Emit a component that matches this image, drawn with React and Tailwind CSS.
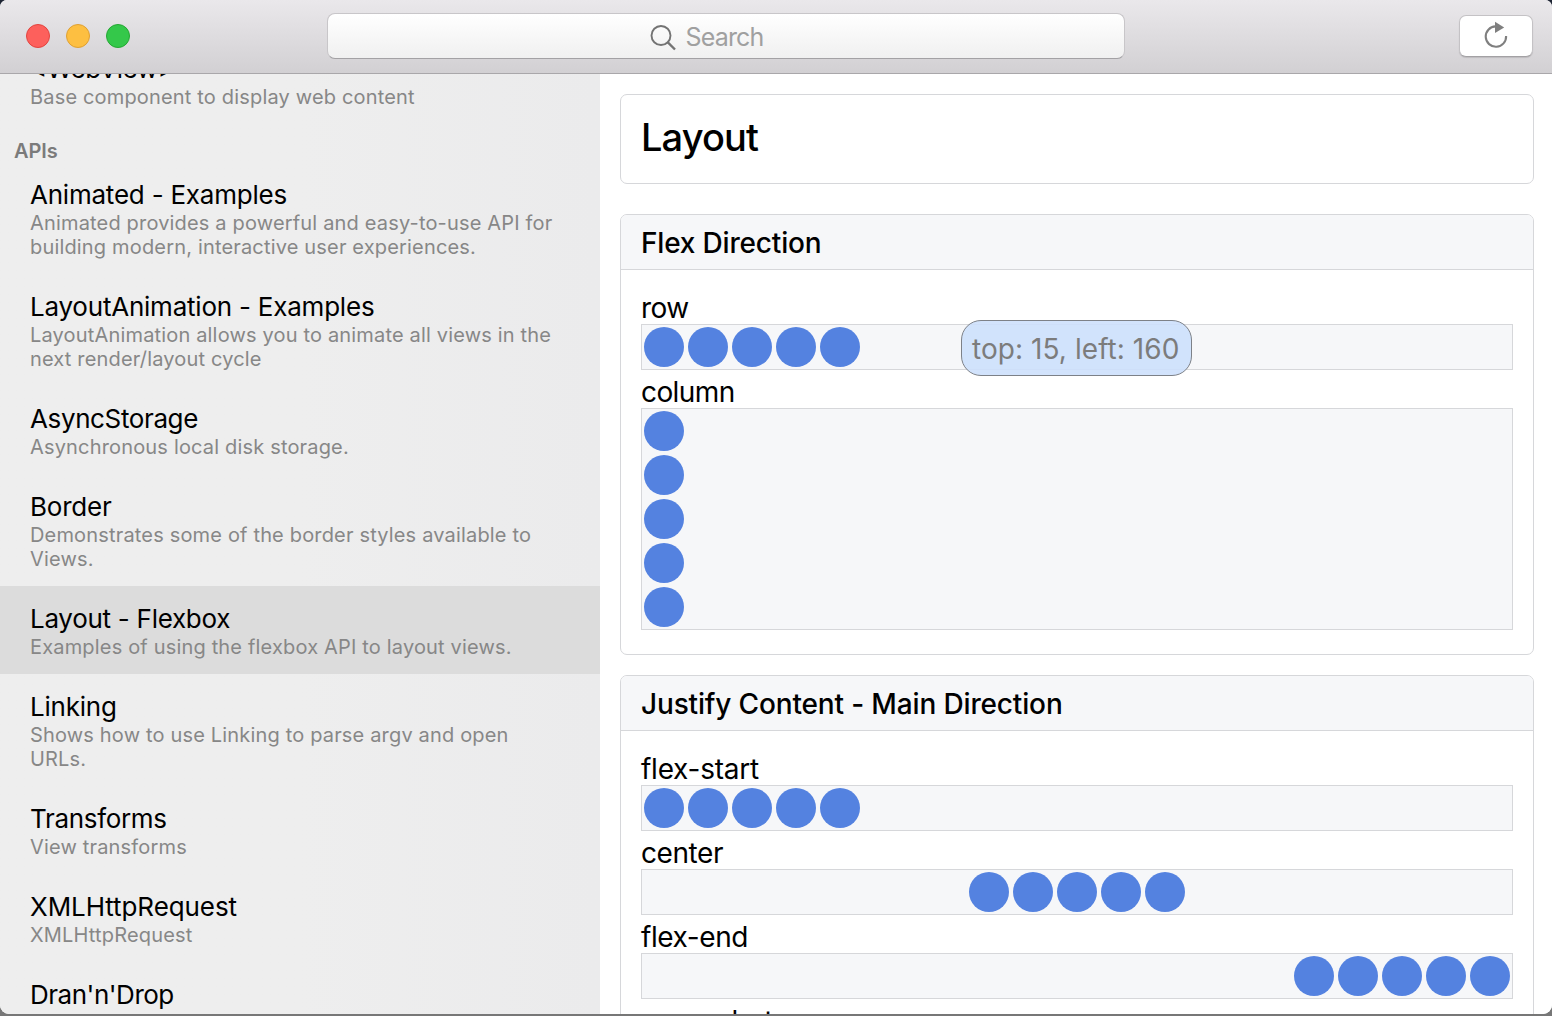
import React from "react";

const apis = [
  { title: "Animated - Examples", lines: ["Animated provides a powerful and easy-to-use API for", "building modern, interactive user experiences."] },
  { title: "LayoutAnimation - Examples", lines: ["LayoutAnimation allows you to animate all views in the", "next render/layout cycle"] },
  { title: "AsyncStorage", lines: ["Asynchronous local disk storage."], tracking: "tracking-[-0.38px]" },
  { title: "Border", lines: ["Demonstrates some of the border styles available to", "Views."] },
  { title: "Layout - Flexbox", lines: ["Examples of using the flexbox API to layout views."], selected: true, tracking: "tracking-[-0.28px]" },
  { title: "Linking", lines: ["Shows how to use Linking to parse argv and open", "URLs."] },
  { title: "Transforms", lines: ["View transforms"], tracking: "tracking-[-0.32px]" },
  { title: "XMLHttpRequest", lines: ["XMLHttpRequest"], tracking: "tracking-[-0.08px]" },
  { title: "Dran'n'Drop", lines: ["Drag and drop"], tracking: "tracking-[-0.48px]" },
];

function Item({ title, lines, selected, tracking = "tracking-[-0.22px]" }) {
  return (
    <div className={`shrink-0 px-[30px] py-4 ${selected ? "bg-[#dcdcdc]" : ""}`}>
      <div className={`h-8 text-[26px] leading-[33px] whitespace-nowrap text-black ${tracking}`}>{title}</div>
      {lines.map((l) => (
        <div key={l} className="h-6 text-[20px] leading-[26px] tracking-[0.17px] whitespace-nowrap text-[#878787]">{l}</div>
      ))}
    </div>
  );
}

function Dots({ className }) {
  return (
    <div className={`flex gap-1 border border-[#d6d7da] bg-[#f6f7f9] p-[2px] ${className}`}>
      {[0, 1, 2, 3, 4].map((i) => (
        <div key={i} className="size-10 shrink-0 rounded-full bg-[#5482e0]" />
      ))}
    </div>
  );
}

function Label({ children, tracking = "tracking-[-0.42px]" }) {
  return <div className={`h-[38px] pt-[5px] text-[28px] leading-[35px] text-black ${tracking}`}>{children}</div>;
}

function Card({ title, tracking, children }) {
  return (
    <section className="shrink-0 overflow-hidden rounded-[7px] border border-[#d6d7da] bg-white">
      <h2 className={`h-[55px] border-b border-[#d6d7da] bg-[#f6f7f9] px-5 text-[28px] leading-[57px] font-medium text-black ${tracking}`}>{title}</h2>
      <div className="px-5 pt-4 pb-6">{children}</div>
    </section>
  );
}

export default function App() {
  return (
    <div className="h-[1016px] w-[1552px] overflow-hidden bg-linear-to-b from-[#1d2433] via-[#5c6068] via-5% to-[#777777] font-['Inter',sans-serif]">
      <div className="flex h-[1014px] flex-col overflow-hidden rounded-t-[7px] rounded-b-[9px] bg-white">
        <header className="flex h-[74px] shrink-0 items-start border-b border-[#a9a7aa] bg-linear-to-b from-[#eae8eb] to-[#d2d0d3]">
          <div className="flex w-[327px] gap-4 pt-6 pl-[26px]">
            <div className="size-6 rounded-full border border-[#e2443f] bg-[#fd605c]" />
            <div className="size-6 rounded-full border border-[#dfa033] bg-[#fdbf41]" />
            <div className="size-6 rounded-full border border-[#25a733] bg-[#34c84a]" />
          </div>
          <div className="mt-[13px] flex h-[46px] w-[798px] items-center justify-center gap-[8px] rounded-[8px] border border-[#c8c6c9] border-b-[#a3a1a4] bg-linear-to-b from-white to-[#f0f0f0] pt-[3px] pr-[39px]">
            <svg width="28" height="28" viewBox="0 0 28 28" fill="none" stroke="#737373" strokeWidth="1.9">
              <circle cx="12" cy="11.5" r="9.5" />
              <path d="M18.6 18.1L26 25.5" strokeWidth="2.4" />
            </svg>
            <span className="text-[25px] leading-[43px] tracking-[-0.8px] text-[#a0a0a0]">Search</span>
          </div>
          <div className="mt-[15px] ml-[334px] h-[42px] w-[74px] rounded-[7px] border border-[#c4c2c5] border-b-[#a3a1a4] bg-white shadow-[0_1px_1px_rgba(0,0,0,0.12)]">
            <svg width="72" height="40" viewBox="0 0 72 40" fill="none">
              <path d="M35.5 10.4A10.2 10.2 0 1 0 46.1 20" stroke="#7f7f7f" strokeWidth="2.1" />
              <path d="M35 5.8L44.2 11.5L35 17Z" fill="#7f7f7f" />
            </svg>
          </div>
        </header>
        <div className="flex min-h-0 flex-1">
          <aside className="flex w-[600px] shrink-0 flex-col overflow-hidden bg-linear-to-r from-[#eeeeee] via-[#eeeeee] to-[#ebebec]">
            <div className="-mt-[38px] shrink-0">
              <Item title="<WebView>" lines={["Base component to display web content"]} tracking="tracking-[-0.5px]" />
            </div>
            <div className="h-[38px] shrink-0 pt-[14px] pl-[14px] text-[20px] leading-[26px] font-semibold tracking-[-0.1px] text-[#7b7b7b]">APIs</div>
            {apis.map((item) => (
              <Item key={item.title} {...item} />
            ))}
          </aside>
          <main className="flex flex-1 flex-col overflow-hidden bg-white pt-5 pr-[18px] pl-5">
            <h1 className="mb-[30px] h-[90px] shrink-0 rounded-[7px] border border-[#d6d7da] px-5 text-[38px] leading-[85px] font-medium tracking-[-0.9px] text-black">Layout</h1>
            <div className="flex shrink-0 flex-col gap-5">
              <Card title="Flex Direction" tracking="tracking-[-0.18px]">
                <Label tracking="tracking-[-0.6px]">row</Label>
                <div className="relative">
                  <Dots className="h-[46px]" />
                  <div className="absolute -top-1 left-[320px] h-14 w-[231px] rounded-[20px] border border-[#7d8188] bg-[#cde0fc]/90 pl-[10px] text-[28px] leading-[57px] tracking-[0.06px] whitespace-nowrap text-[#7c7c7c]">top: 15, left: 160</div>
                </div>
                <Label tracking="tracking-[-0.6px]">column</Label>
                <Dots className="h-[222px] flex-col" />
              </Card>
              <Card title="Justify Content - Main Direction" tracking="tracking-[-0.15px]">
                <Label tracking="tracking-[-0.25px]">flex-start</Label>
                <Dots className="h-[46px]" />
                <Label>center</Label>
                <Dots className="h-[46px] justify-center" />
                <Label>flex-end</Label>
                <Dots className="h-[46px] justify-end" />
                <Label>space-between</Label>
                <Dots className="h-[46px] justify-between" />
              </Card>
            </div>
          </main>
        </div>
      </div>
    </div>
  );
}
